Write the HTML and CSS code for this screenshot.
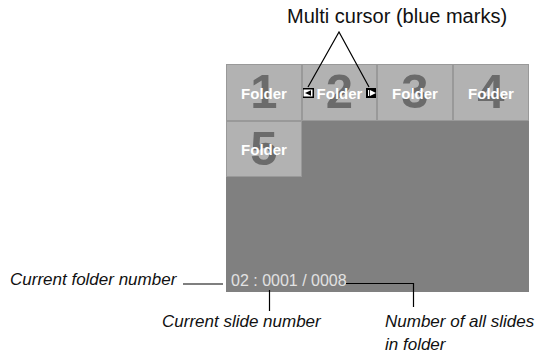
FILE: index.html
```html
<html>
	<head>
		<link rel="stylesheet" href="styles.css">
	</head>
	<body>
		<div class="page">
			<p class="title">Multi cursor (blue marks)</p>
			<div class="main">
				<p class="label side">Current folder number</p>
				<div class="screen">
					<div class="tiles">
						<div class="tile"><span class="num">1</span><span class="name">Folder</span></div>
						<div class="tile">
							<span class="num">2</span><span class="name">Folder</span>
							<svg class="mark left" width="12" height="10" viewBox="0 0 12 10">
								<rect width="12" height="10" fill="#000"/>
								<rect x="1.5" y="1.5" width="9" height="7" fill="#fff"/>
								<polygon points="3,5 9,2.2 9,7.8" fill="#000"/>
							</svg>
							<svg class="mark right" width="12" height="10" viewBox="0 0 12 10">
								<rect width="12" height="10" fill="#000"/>
								<rect x="2" y="2" width="1.2" height="6" fill="#fff"/>
								<polygon points="4,2 10,5 4,8" fill="#fff"/>
							</svg>
						</div>
						<div class="tile"><span class="num">3</span><span class="name">Folder</span></div>
						<div class="tile"><span class="num">4</span><span class="name">Folder</span></div>
						<div class="tile"><span class="num">5</span><span class="name">Folder</span></div>
					</div>
					<p class="status">02 : 0001 / 0008</p>
				</div>
			</div>
			<div class="captions">
				<p class="label slide">Current slide number</p>
				<p class="label">Number of all slides<br>in folder</p>
			</div>
			<svg class="leaders" width="541" height="357" viewBox="0 0 541 357">
				<g stroke="#000" stroke-width="1.2" fill="none">
					<polyline points="308,87 339,32 369,87"/>
					<line x1="183" y1="284" x2="223" y2="284"/>
					<polyline points="346,283.5 413.5,283.5 413.5,307"/>
					<line x1="269.5" y1="290" x2="269.5" y2="311"/>
				</g>
			</svg>
		</div>
	</body>
</html>
```

FILE: styles.css
```css
* {
	box-sizing: border-box;
	padding: 0;
	margin: 0;
}
html {
	background-color: white;
	font-family: "Liberation Sans", Arial, sans-serif;
}
.page {
	position: relative;
	width: 541px;
	height: 357px;
}
.title {
	height: 64px;
	padding: 4px 0 0 287px;
	font-size: 20px;
	line-height: 24px;
	color: #111;
}
.main {
	display: flex;
}
.label {
	font-style: italic;
	font-size: 17px;
	line-height: 23px;
	color: #111;
}
.side {
	width: 226px;
	padding-left: 10px;
	line-height: 20px;
	align-self: flex-end;
	margin-bottom: 2px;
}
.screen {
	width: 303px;
	height: 228px;
	background-color: #808080;
	display: flex;
	flex-direction: column;
}
.tiles {
	display: grid;
	grid-template-columns: 76px 75px 76px 76px;
	grid-template-rows: 57px 56px;
}
.tile {
	display: grid;
	place-items: center;
	background-color: #b2b2b2;
	border: 1px solid #999;
	overflow: hidden;
}
.tile > * {
	grid-area: 1 / 1;
}
.num {
	font-size: 49px;
	font-weight: bold;
	color: #6b6b6b;
	line-height: 1;
	margin-top: -2px;
}
.name {
	font-size: 15px;
	font-weight: bold;
	color: white;
	margin-top: 1px;
}
.mark {
	display: block;
	margin-top: 1px;
}
.mark.left {
	justify-self: start;
	margin-left: -1px;
}
.mark.right {
	justify-self: end;
	margin-right: -2px;
}
.status {
	margin-top: auto;
	padding: 0 0 2px 5px;
	font-size: 16px;
	line-height: 18px;
	color: #e2e2e2;
}
.captions {
	display: flex;
	padding: 18px 0 0 162px;
}
.slide {
	width: 223px;
}
.leaders {
	position: absolute;
	left: 0;
	top: 0;
	pointer-events: none;
}
```
